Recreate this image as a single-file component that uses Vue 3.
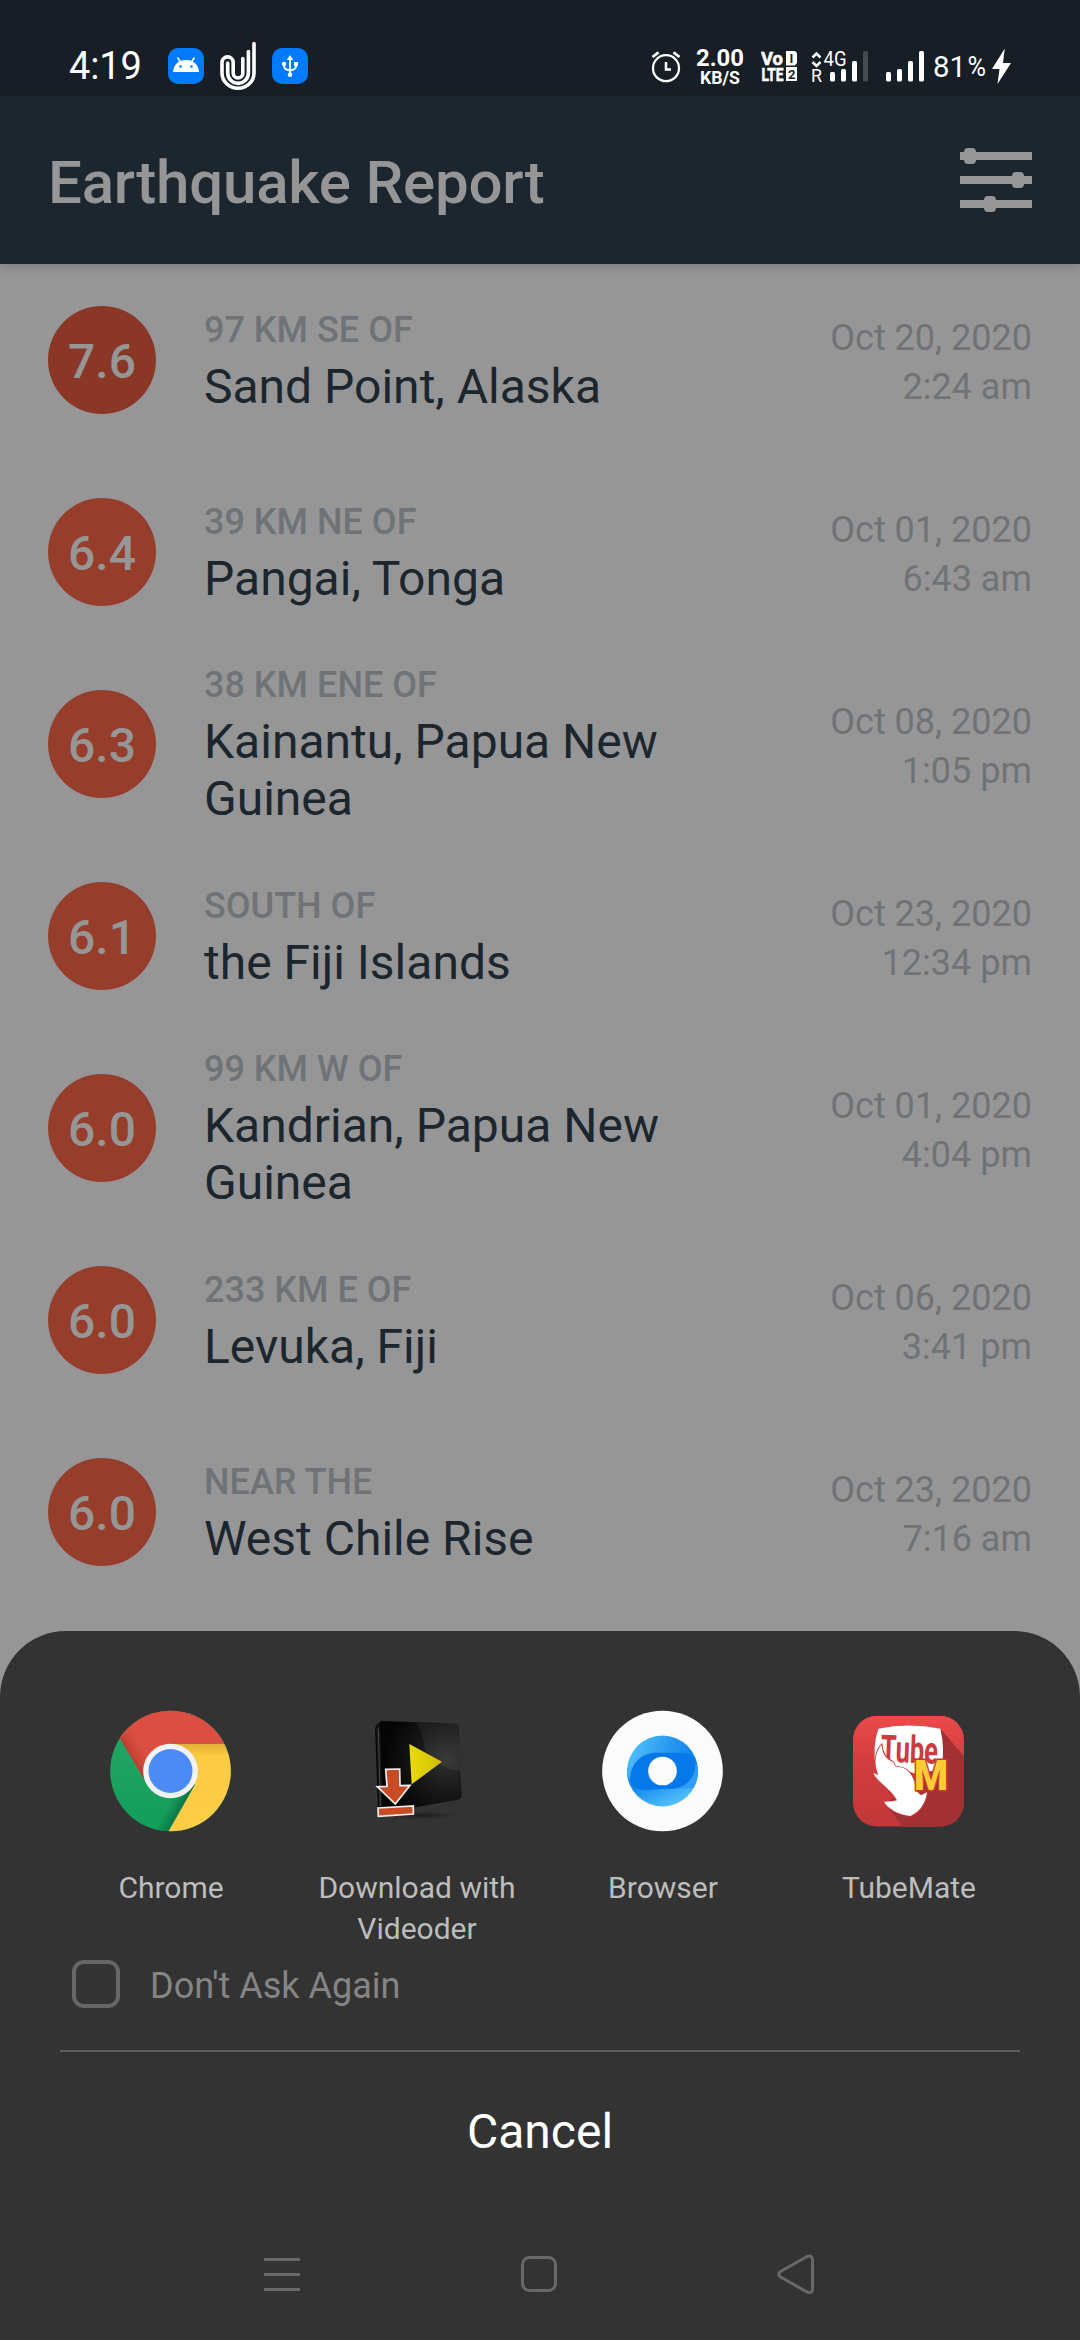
<script setup>
const quakes = [
  { mag: '7.6', offset: '97 KM SE OF', place: 'Sand Point, Alaska', date: 'Oct 20, 2020', time: '2:24 am', strong: true },
  { mag: '6.4', offset: '39 KM NE OF', place: 'Pangai, Tonga', date: 'Oct 01, 2020', time: '6:43 am' },
  { mag: '6.3', offset: '38 KM ENE OF', place: 'Kainantu, Papua New Guinea', date: 'Oct 08, 2020', time: '1:05 pm' },
  { mag: '6.1', offset: 'SOUTH OF', place: 'the Fiji Islands', date: 'Oct 23, 2020', time: '12:34 pm' },
  { mag: '6.0', offset: '99 KM W OF', place: 'Kandrian, Papua New Guinea', date: 'Oct 01, 2020', time: '4:04 pm' },
  { mag: '6.0', offset: '233 KM E OF', place: 'Levuka, Fiji', date: 'Oct 06, 2020', time: '3:41 pm' },
  { mag: '6.0', offset: 'NEAR THE', place: 'West Chile Rise', date: 'Oct 23, 2020', time: '7:16 am' },
]
</script>

<template>
  <div class="screen">
    <div class="status">
      <span class="clock">4:19</span>
      <svg class="s-android" width="36" height="96" viewBox="168 0 36 96">
        <rect x="168" y="48" width="36" height="36" rx="10" fill="#007bff" />
        <path d="M173 72C173.500 64.500 178.500 60 186 60S198.500 64.500 199 72Z" fill="#fff" />
        <path d="M177.500 57.500L180.500 62M194.500 57.500L191.500 62" stroke="#fff" stroke-width="1.500" />
        <circle cx="180.500" cy="66.500" r="1.300" fill="#007bff" />
        <circle cx="191.500" cy="66.500" r="1.300" fill="#007bff" />
      </svg>
      <svg class="s-clip" width="36" height="96" viewBox="220 0 36 96" fill="none" stroke="#fff" stroke-width="3.600" stroke-linecap="round">
        <path d="M254 43.500V73A16 15.300 0 0 1 222 73V62.500A5.600 5.600 0 0 1 233.200 62.500V73A4.800 5 0 0 0 242.800 73V58.500" />
        <path d="M248.400 51.500V73A10.300 10.300 0 0 1 227.700 73V63" />
      </svg>
      <svg class="s-usb" width="36" height="96" viewBox="272 0 36 96">
        <rect x="272" y="48" width="36" height="36" rx="10" fill="#007bff" />
        <path d="M290 58V75M284 64V66Q284 69.500 290 70.500Q296 69.500 296 66V64" fill="none" stroke="#fff" stroke-width="1.900" />
        <path d="M286.800 60L290 55L293.200 60Z" fill="#fff" />
        <circle cx="284" cy="64" r="2.200" fill="#fff" />
        <rect x="294" y="62" width="4" height="4" fill="#fff" />
        <circle cx="290" cy="74.700" r="2.300" fill="#fff" />
      </svg>
      <div class="spacer"></div>
      <svg width="30" height="96" viewBox="651 0 30 96" fill="none" stroke="#fff">
        <circle cx="666" cy="68.200" r="13" stroke-width="2.300" />
        <path d="M666 62V69.500H671" stroke-width="2.600" />
        <path d="M652.500 57L658.500 52.300M679.500 57L673.500 52.300" stroke-width="2.800" />
      </svg>
      <svg class="s-speed" width="48" height="96" viewBox="696 0 48 96" fill="#fff" font-weight="700">
        <text x="696" y="66" font-size="24" textLength="48" lengthAdjust="spacingAndGlyphs">2.00</text>
        <text x="700" y="83.500" font-size="17.500" textLength="40" lengthAdjust="spacingAndGlyphs">KB/S</text>
      </svg>
      <svg class="s-volte" width="37" height="96" viewBox="761 0 37 96" fill="#fff" font-weight="700">
        <g stroke="#fff" stroke-width=".6">
          <text x="761" y="65" font-size="18.500" textLength="22" lengthAdjust="spacingAndGlyphs">Vo</text>
          <text x="761.500" y="81" font-size="18.500" textLength="22" lengthAdjust="spacingAndGlyphs">LTE</text>
        </g>
        <path d="M786 51H795L797 53V63L795 65.500H786ZM786 67H797V81H786Z" />
        <g fill="#171e25">
          <text x="789.500" y="62.900" font-size="13">I</text>
          <text x="788" y="78.700" font-size="13">2</text>
        </g>
      </svg>
      <svg class="s-net" width="57" height="96" viewBox="811 0 57 96" fill="#fff">
        <path d="M812.500 57.500L816.500 53.500L820.500 57.500M812.500 62L816.500 66L820.500 62" fill="none" stroke="#fff" stroke-width="2.500" />
        <text x="823.500" y="65.700" font-size="20.500" textLength="23" lengthAdjust="spacingAndGlyphs">4G</text>
        <text x="811" y="82" font-size="18" textLength="11" lengthAdjust="spacingAndGlyphs">R</text>
        <rect x="830" y="72" width="5" height="9.500" rx="1.500" />
        <rect x="841" y="69" width="5" height="12.500" rx="1.500" />
        <rect x="852" y="61" width="5" height="20.500" rx="1.500" />
        <rect x="863" y="51" width="5" height="30.500" rx="1.500" fill="#454b51" />
      </svg>
      <svg class="s-bars" width="38" height="96" viewBox="886 0 38 96" fill="#fff">
        <rect x="886" y="72" width="5" height="9.500" rx="1.500" />
        <rect x="897" y="69" width="5" height="12.500" rx="1.500" />
        <rect x="908" y="61" width="5" height="20.500" rx="1.500" />
        <rect x="919" y="51" width="5" height="30.500" rx="1.500" />
      </svg>
      <svg class="s-batt" width="79" height="96" viewBox="933 0 79 96" fill="#fff">
        <text x="933" y="77" font-size="30" textLength="33" lengthAdjust="spacingAndGlyphs">81</text>
        <text x="967.500" y="76" font-size="27" textLength="18.500" lengthAdjust="spacingAndGlyphs">%</text>
        <path d="M1004.800 48.500L992 69H999.500L997.500 84L1011 63H1003Z" />
      </svg>
    </div>

    <header class="bar">
      <h1>Earthquake Report</h1>
      <svg width="72" height="66" viewBox="0 0 72 66" fill="#969696">
        <path d="M0 4H72V12H0ZM0 28H72V36H0ZM0 52H72V60H0Z" />
        <rect x="4" y="0" width="12" height="16" rx="4" />
        <rect x="52" y="24" width="12" height="16" rx="4" />
        <rect x="24" y="48" width="12" height="16" rx="4" />
      </svg>
    </header>

    <main class="list">
      <div v-for="(q, i) in quakes" :key="i" class="row">
        <div class="mag" :class="{ strong: q.strong }">{{ q.mag }}</div>
        <div class="where">
          <div class="offset">{{ q.offset }}</div>
          <div class="place">{{ q.place }}</div>
        </div>
        <div class="when">
          <div>{{ q.date }}</div>
          <div>{{ q.time }}</div>
        </div>
      </div>
    </main>

    <section class="sheet">
      <div class="apps">
        <div class="app">
          <svg width="126" height="130" viewBox="144 139 378 390">
            <defs>
              <linearGradient id="cg" x1="0" x2="0" y1="0" y2="1"><stop offset="0" stop-color="#27a567" /><stop offset="1" stop-color="#129e5a" /></linearGradient>
              <linearGradient id="cs" gradientUnits="userSpaceOnUse" x1="212" y1="298" x2="262" y2="268"><stop offset="0" stop-color="#b53a2d" /><stop offset="1" stop-color="#dc4e42" stop-opacity="0" /></linearGradient>
              <linearGradient id="cy" x1="0" x2="0" y1="0" y2="1"><stop offset="0" stop-color="#e2ae36" /><stop offset=".14" stop-color="#fdcb43" /><stop offset="1" stop-color="#ffce46" /></linearGradient>
              <linearGradient id="cd" gradientUnits="userSpaceOnUse" x1="325" y1="430" x2="364" y2="450"><stop offset="0" stop-color="#0c7c48" stop-opacity="0" /><stop offset="1" stop-color="#0b7343" /></linearGradient>
              <clipPath id="cc"><circle cx="331.500" cy="334" r="181" /></clipPath>
            </defs>
            <g clip-path="url(#cc)">
              <rect x="150" y="152" width="363" height="364" fill="url(#cg)" />
              <path d="M325 400L405 375L323 518H280Z" fill="url(#cd)" />
              <path d="M331 252H520V520H323L405 375Z" fill="url(#cy)" />
              <path d="M181 237L150 180V140H520V252H331L250 355Z" fill="#dc4e42" />
              <path d="M181 237L250 355L331 252L225 190Z" fill="url(#cs)" />
            </g>
            <circle cx="331.500" cy="334" r="82" fill="#f1f2f4" />
            <circle cx="331.500" cy="334" r="66" fill="#4c8bf5" />
          </svg>
          <span>Chrome</span>
        </div>
        <div class="app">
          <svg width="126" height="130" viewBox="882 139 378 390">
            <defs>
              <radialGradient id="vb" cx=".82" cy=".45" r=".75"><stop offset="0" stop-color="#303030" /><stop offset=".55" stop-color="#151515" /><stop offset="1" stop-color="#050505" /></radialGradient>
              <radialGradient id="vs"><stop offset="0" stop-color="#111" stop-opacity=".7" /><stop offset="1" stop-color="#222" stop-opacity="0" /></radialGradient>
              <linearGradient id="vy"><stop offset="0" stop-color="#e9dc08" /><stop offset="1" stop-color="#d2bd05" /></linearGradient>
            </defs>
            <ellipse cx="1085" cy="467" rx="115" ry="14" fill="url(#vs)" />
            <path d="M947 210Q948 190 968 184L978 190V448L955 442Z" fill="#151515" stroke="#050505" stroke-width="3" />
            <path d="M955 207L961 440" stroke="#484848" stroke-width="3" />
            <path d="M974 184L1185 192Q1195 193 1196 204L1205 405Q1205 417 1194 420L1060 444L976 446Q968 446 968 435L960 200Q961 185 974 184Z" fill="url(#vb)" />
            <path d="M1070 190L1185 193Q1194 194 1195 204L1202 335Q1130 325 1095 270Q1088 225 1070 190Z" fill="#fff" opacity=".055" />
            <path d="M1048 253L1146 306L1055 374Z" fill="url(#vy)" />
            <path d="M977 329L1019 328L1020 378L1050 377L1006 433L952 381L981 380Z" fill="#c84b26" stroke="#f5eeee" stroke-width="5" />
            <path d="M954 445L1060 439V463L955 470Z" fill="#c84b26" stroke="#f5eeee" stroke-width="5" />
          </svg>
          <span>Download with Videoder</span>
        </div>
        <div class="app">
          <svg width="126" height="130" viewBox="120 139 378 390">
            <defs>
              <linearGradient id="bt" gradientUnits="userSpaceOnUse" x1="215" y1="260" x2="400" y2="320"><stop offset="0" stop-color="#4fbefa" /><stop offset=".3" stop-color="#3aa9f5" /><stop offset="1" stop-color="#0a7fec" /></linearGradient>
              <linearGradient id="bb" gradientUnits="userSpaceOnUse" x1="270" y1="350" x2="310" y2="440"><stop offset="0" stop-color="#0a80ed" /><stop offset="1" stop-color="#4dbcfa" /></linearGradient>
            </defs>
            <circle cx="307.500" cy="334" r="181" fill="#fbfbfb" />
            <path d="M201 334A106.500 106.500 0 0 1 414 334Z" fill="url(#bt)" />
            <path d="M201 334A106.500 106.500 0 0 0 414 334Z" fill="url(#bb)" />
            <path d="M406 306L413.500 322A106.500 106.500 0 0 1 401 385L350 388Z" fill="#2f9df3" />
            <path d="M202 350A106.500 106.500 0 0 1 201 325L215 320L212 362Z" fill="#40aff5" />
            <path d="M211 361C209 312 245 279 290 279C350 282 395 270 406 306C410 355 375 388 330 388C270 385 222 405 211 361Z" fill="#0579e9" />
            <circle cx="307.500" cy="334" r="43" fill="#fbfbfb" />
          </svg>
          <span>Browser</span>
        </div>
        <div class="app">
          <svg width="126" height="130" viewBox="3 0 378 390">
            <defs>
              <linearGradient id="tr" x1="0" x2="0" y1="0" y2="1"><stop offset="0" stop-color="#ec4a4a" /><stop offset=".4" stop-color="#d33d3f" /><stop offset="1" stop-color="#c23739" /></linearGradient>
              <clipPath id="tc"><rect x="24" y="29" width="333" height="333" rx="72" /></clipPath>
            </defs>
            <g clip-path="url(#tc)">
              <rect x="24" y="29" width="333" height="333" fill="url(#tr)" />
              <path d="M290 72L360 155V370H180L118 292L200 250Z" fill="#a33033" />
            </g>
            <path d="M100 68Q190 49 286 68Q301 130 289 192L206 202L150 180L92 185Q82 120 100 68Z" fill="#fff" />
            <text x="106" y="167" font-size="114" font-weight="700" textLength="172" lengthAdjust="spacingAndGlyphs" transform="rotate(2 106 167)" fill="#cc3b3e">Tube</text>
            <path d="M110 116C112 142 121 158 144 168L150 181L166 184C195 188 210 220 214 256L228 268L246 259C243 284 230 315 196 330C160 326 127 307 117 287L143 286L156 283C139 248 95 227 85 201L99 207L93 184C88 155 96 132 110 116Z" fill="#fff" stroke="#cc3b3e" stroke-width="5" paint-order="stroke" />
            <text x="207" y="252" font-size="125" font-weight="900" textLength="102" lengthAdjust="spacingAndGlyphs" fill="#fdcb35" stroke="#c33a37" stroke-width="9" paint-order="stroke">M</text>
          </svg>
          <span>TubeMate</span>
        </div>
      </div>
      <div class="ask">
        <i class="check"></i>
        <span>Don't Ask Again</span>
      </div>
      <div class="cancel">Cancel</div>
      <nav class="nav">
        <svg width="40" height="42" viewBox="262 2253 40 42" stroke="#686868" stroke-width="3">
          <path d="M264 2259.500H300M264 2274.500H300M264 2289.500H300" />
        </svg>
        <svg width="40" height="42" viewBox="520 2253 40 42" fill="none" stroke="#686868" stroke-width="3">
          <rect x="523.500" y="2257.500" width="33" height="33" rx="7" />
        </svg>
        <svg width="40" height="42" viewBox="776 2253 40 42" fill="none" stroke="#686868" stroke-width="3">
          <path d="M780.500 2271.500L807 2256.500Q812.500 2254.500 812.500 2260V2288.500Q812.500 2294 807 2292L780.500 2277Q777 2274.250 780.500 2271.500Z" />
        </svg>
      </nav>
    </section>
  </div>
</template>

<style>
body {
  background: #969696;
}
</style>

<style scoped>
.screen {
  display: flex;
  flex-direction: column;
  width: 1080px;
  height: 2340px;
  overflow: hidden;
  background: #969696;
  font-family: Roboto, "Noto Sans", sans-serif;
}
svg {
  display: block;
  flex: none;
}
.status {
  display: flex;
  height: 96px;
  flex: none;
  box-sizing: border-box;
  padding: 0 68px 0 69px;
  background: #171e25;
  color: #fff;
}
.clock {
  width: 99px;
  padding-top: 43px;
  font-size: 38px;
  line-height: 46px;
  letter-spacing: -0.1px;
}
.s-clip,
.s-usb { margin-left: 16px; }
.spacer { flex: 1; }
.s-speed { margin-left: 15px; }
.s-volte { margin-left: 17px; }
.s-net { margin-left: 13px; }
.s-bars { margin-left: 18px; }
.s-batt { margin-left: 9px; }

.bar {
  position: relative;
  display: flex;
  justify-content: space-between;
  align-items: center;
  height: 168px;
  flex: none;
  box-sizing: border-box;
  padding: 2px 48px 0;
  background: #1c262e;
  box-shadow: 0 3px 10px rgba(0, 0, 0, 0.16);
}
.bar h1 {
  margin: 0;
  padding-top: 3px;
  font-size: 60px;
  font-weight: 500;
  line-height: 72px;
  letter-spacing: -0.2px;
  color: #969696;
}
.list {
  flex: none;
  height: 1367px;
}
.row {
  display: flex;
  align-items: center;
  height: 192px;
  padding: 0 48px;
}
.mag {
  flex: none;
  width: 108px;
  height: 108px;
  border-radius: 50%;
  background: #973d2b;
  color: #969696;
  font-size: 48px;
  font-weight: 500;
  line-height: 112px;
  text-align: center;
}
.mag.strong { background: #8b3728; }
.where {
  flex: 1;
  margin: 0 100px 0 48px;
}
.offset {
  padding: 5px 0 2px;
  font-size: 36px;
  font-weight: 500;
  line-height: 42px;
  color: #707376;
}
.place {
  padding: 5px 0 2px;
  font-size: 48px;
  line-height: 57px;
  color: #1c262e;
}
.when {
  flex: none;
  padding-top: 5px;
  font-size: 36px;
  line-height: 49px;
  text-align: right;
  color: #707376;
}
.sheet {
  display: flex;
  flex-direction: column;
  flex: 1;
  border-radius: 66px 66px 0 0;
  background: #333;
}
.apps {
  display: grid;
  grid-template-columns: repeat(4, 246px);
  padding: 75px 48px 0;
}
.app {
  display: flex;
  flex-direction: column;
  align-items: center;
  gap: 31px;
  font-size: 30px;
  line-height: 41px;
  text-align: center;
  color: #bdbdbd;
}
.app span { width: 210px; }
.ask {
  display: flex;
  align-items: center;
  gap: 30px;
  height: 48px;
  margin: 11px 60px 0;
  padding: 0 12px 42px;
  border-bottom: 2px solid #5c5c5c;
  font-size: 36px;
  color: #858585;
}
.check {
  width: 48px;
  height: 48px;
  box-sizing: border-box;
  border: 4px solid #666;
  border-radius: 12px;
}
.ask span { padding-top: 4px; }
.cancel {
  margin-top: 48px;
  font-size: 48px;
  line-height: 64px;
  text-align: center;
  color: #fff;
}
.nav {
  display: flex;
  justify-content: space-between;
  margin: 89px 264px 0 262px;
}
</style>
